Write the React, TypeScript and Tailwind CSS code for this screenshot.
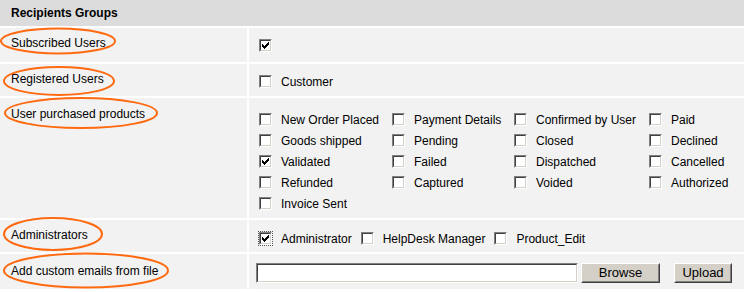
import React from 'react';

const FONT = "font-['Liberation_Sans',Arial,sans-serif]";

function Checkbox({ checked = false, focused = false }: { checked?: boolean; focused?: boolean }) {
  return (
    <span
      className={`inline-flex w-[13px] h-[13px] shrink-0 border border-t-[#808080] border-l-[#808080] border-r-white border-b-white ${
        focused ? 'outline outline-1 outline-dotted outline-[#555] outline-offset-0' : ''
      }`}
    >
      <span className="flex flex-1 items-center justify-center border border-t-[#404040] border-l-[#404040] border-r-[#d4d0c8] border-b-[#d4d0c8] bg-white">
        {checked && (
          <svg width="7" height="7" viewBox="0 0 7 7" shapeRendering="crispEdges">
            <path
              fill="#000"
              d="M6 0h1v1h-1z M5 1h2v1h-2z M0 2h1v1h-1z M4 2h3v1h-3z M0 3h2v1h-2z M3 3h3v1h-3z M0 4h5v1h-5z M1 5h3v1h-3z M2 6h1v1h-1z"
            />
          </svg>
        )}
      </span>
    </span>
  );
}

function Option({ label, checked, focused }: { label: string; checked?: boolean; focused?: boolean }) {
  return (
    <label className="flex items-center gap-[9px] whitespace-nowrap">
      <Checkbox checked={checked} focused={focused} />
      <span>{label}</span>
    </label>
  );
}

function Button({ children, className = '' }: { children: React.ReactNode; className?: string }) {
  return (
    <span className={`flex h-[20px] border border-t-white border-l-white border-r-[#404040] border-b-[#404040] ${className}`}>
      <span className="flex flex-1 items-center justify-center bg-[#d4d0c8] border border-t-[#d4d0c8] border-l-[#d4d0c8] border-r-[#808080] border-b-[#808080] text-[13px]">
        {children}
      </span>
    </span>
  );
}

const orders: { label: string; checked?: boolean }[] = [
  { label: 'New Order Placed' },
  { label: 'Payment Details' },
  { label: 'Confirmed by User' },
  { label: 'Paid' },
  { label: 'Goods shipped' },
  { label: 'Pending' },
  { label: 'Closed' },
  { label: 'Declined' },
  { label: 'Validated', checked: true },
  { label: 'Failed' },
  { label: 'Dispatched' },
  { label: 'Cancelled' },
  { label: 'Refunded' },
  { label: 'Captured' },
  { label: 'Voided' },
  { label: 'Authorized' },
  { label: 'Invoice Sent' },
];

export default function App() {
  return (
    <div className={`relative w-[744px] h-[292px] bg-white text-[12px] text-black ${FONT}`}>
      <div className="grid grid-cols-[247px_1fr] grid-rows-[26px_34px_32px_120px_32px_35px] gap-[2px]">
        <div className="col-span-2 flex items-center bg-[#dcdcdc] pl-[11px] font-bold">Recipients Groups</div>

        <div className="flex items-center bg-[#f2f2f2] pl-[11px] pb-[4px]">Subscribed Users</div>
        <div className="flex items-center bg-[#f2f2f2] pl-[10px]">
          <Checkbox checked />
        </div>

        <div className="flex items-center bg-[#f2f2f2] pl-[11px] pb-[2px]">Registered Users</div>
        <div className="flex items-center bg-[#f2f2f2] pl-[10px] pt-[3px]">
          <Option label="Customer" />
        </div>

        <div className="bg-[#f2f2f2] pl-[11px] pt-[7px]">User purchased products</div>
        <div className="bg-[#f2f2f2] pl-[10px] pt-[11px]">
          <div className="grid grid-cols-[133px_122px_135px_auto] auto-rows-[21px]">
            {orders.map((o) => (
              <Option key={o.label} label={o.label} checked={o.checked} />
            ))}
          </div>
        </div>

        <div className="flex items-center bg-[#f2f2f2] pl-[11px] pb-[2px]">Administrators</div>
        <div className="flex items-center gap-[9px] bg-[#f2f2f2] pl-[10px] pt-[5px]">
          <Option label="Administrator" checked focused />
          <Option label="HelpDesk Manager" />
          <Option label="Product_Edit" />
        </div>

        <div className="flex items-center bg-[#f2f2f2] pl-[11px] pb-[1px]">Add custom emails from file</div>
        <div className="flex items-center bg-[#f2f2f2] pl-[7px] pt-[3px]">
          <span className="h-[20px] w-[322px] border border-t-[#808080] border-l-[#808080] border-r-white border-b-white">
            <span className="block h-full border border-t-[#404040] border-l-[#404040] border-r-[#d4d0c8] border-b-[#d4d0c8] bg-white" />
          </span>
          <Button className="ml-[3px] w-[79px]">Browse</Button>
          <Button className="ml-[14px] w-[58px]">Upload</Button>
        </div>
      </div>

      <svg className="pointer-events-none absolute inset-0" width="744" height="292" viewBox="0 0 744 292" fill="none">
        <g stroke="#ff6a10" strokeWidth="2">
          <ellipse cx="58" cy="41" rx="57" ry="12.5" />
          <ellipse cx="59" cy="81" rx="55" ry="14" />
          <ellipse cx="81" cy="113" rx="76" ry="15" />
          <ellipse cx="53" cy="234" rx="49" ry="16" />
          <ellipse cx="86" cy="270.5" rx="82" ry="17" />
        </g>
      </svg>
    </div>
  );
}
